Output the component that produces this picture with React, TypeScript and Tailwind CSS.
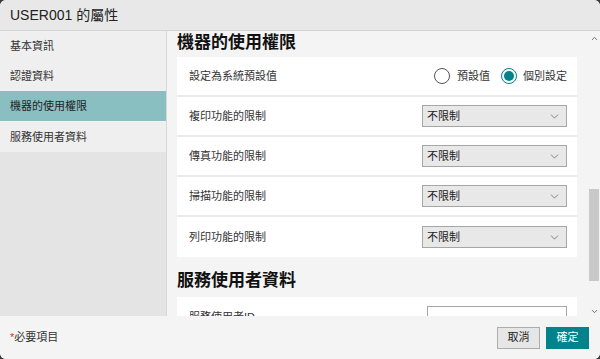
import React from 'react';
import { ChevronDown, ChevronUp } from 'lucide-react';

const font = "font-['Liberation_Sans','Noto_Sans_CJK_TC',sans-serif]";

const navItems = ['基本資訊', '認證資料', '機器的使用權限', '服務使用者資料'];
const limits = ['複印功能的限制', '傳真功能的限制', '掃描功能的限制', '列印功能的限制'];

function Select() {
  return (
    <div className="w-[145px] h-[22px] bg-[#e8e8e8] border border-[#a6a6a6] flex items-center justify-between pl-[4px] pr-[5px] text-[11px] text-[#222]">
      <span>不限制</span>
      <ChevronDown size={13} strokeWidth={1.3} className="text-[#555]" />
    </div>
  );
}

export default function App() {
  return (
    <div className="w-[600px] h-[359px] bg-[#3a3a3a]">
      <div className={`${font} w-full h-full rounded-[6px] overflow-hidden flex flex-col bg-[#f4f4f4]`}>
        <div className="h-[31px] shrink-0 bg-[#e8e8e8] border-b border-[#d4d4d4] flex items-center px-[10px] text-[14px] text-[#222]">
          USER001 的屬性
        </div>

        <div className="flex h-[285px] shrink-0">
          <div className="w-[167px] shrink-0 bg-[#e4e4e4] border-r border-[#d8d8d8] flex flex-col">
            <div className="bg-[#efefef] flex flex-col">
              {navItems.map((item, i) => (
                <div
                  key={item}
                  className={
                    i === 2
                      ? 'h-[31px] flex items-center pl-[10px] text-[11px] text-[#1e1e1e] bg-[#8abfc2] border-b border-[#f4f4f4]'
                      : 'h-[30px] flex items-center pl-[10px] text-[11px] text-[#333]'
                  }
                >
                  {item}
                </div>
              ))}
            </div>
          </div>

          <div className="flex-1 overflow-hidden pl-[10px] pr-[11px]">
            <h2 className="h-[26px] pt-[1px] text-[17px] font-bold leading-[22px] text-[#111]">機器的使用權限</h2>
            <div className="bg-white flex flex-col">
              <div className="h-[40px] flex items-center justify-between px-[10px] pl-[12px] border-b-2 border-[#ebebeb]">
                <span className="text-[11px] text-[#333]">設定為系統預設值</span>
                <div className="flex items-center text-[11px] text-[#333]">
                  <span className="w-[16px] h-[16px] rounded-full border border-[#555] bg-white" />
                  <span className="ml-[7px]">預設值</span>
                  <span className="ml-[11px] w-[16px] h-[16px] rounded-full border-[1.5px] border-[#00838a] bg-white flex items-center justify-center">
                    <span className="w-[10px] h-[10px] rounded-full bg-[#00838a]" />
                  </span>
                  <span className="ml-[6px]">個別設定</span>
                </div>
              </div>
              {limits.map((label, i) => (
                <div
                  key={label}
                  className={
                    i < limits.length - 1
                      ? 'h-[40px] flex items-center justify-between px-[10px] pl-[12px] border-b-2 border-[#ebebeb]'
                      : 'h-[40px] flex items-center justify-between px-[10px] pl-[12px]'
                  }
                >
                  <span className="text-[11px] text-[#333]">{label}</span>
                  <Select />
                </div>
              ))}
            </div>
            <h2 className="mt-[12px] h-[28px] text-[17px] font-bold leading-[24px] text-[#111]">服務使用者資料</h2>
            <div className="bg-white h-[40px] flex items-start justify-between px-[10px] pl-[12px] pt-[9px]">
              <span className="text-[11px] text-[#333] pt-[3px]">服務使用者ID</span>
              <div className="w-[140px] h-[24px] border border-[#a6a6a6] bg-white" />
            </div>
          </div>

          <div className="w-[12px] shrink-0 bg-[#f4f4f4] flex flex-col items-center">
            <ChevronUp size={9} strokeWidth={2} className="mt-[3px] text-[#444]" />
            <div className="mt-[146px] w-[10px] h-[92px] bg-[#c9c9c9]" />
            <ChevronDown size={9} strokeWidth={2} className="mt-[26px] text-[#444]" />
          </div>
        </div>

        <div className="flex-1 flex items-center justify-between pl-[10px] pr-[11px] bg-[#f4f4f4]">
          <span className="text-[11px] text-[#333]">
            <span className="text-[#d0342c]">*</span>必要項目
          </span>
          <div className="flex gap-[6px]">
            <button className="w-[43px] h-[22px] bg-[#e6e6e6] border border-[#adadad] text-[11px] text-[#222]">取消</button>
            <button className="w-[43px] h-[22px] bg-[#00838a] text-[11px] text-white">確定</button>
          </div>
        </div>
      </div>
    </div>
  );
}
